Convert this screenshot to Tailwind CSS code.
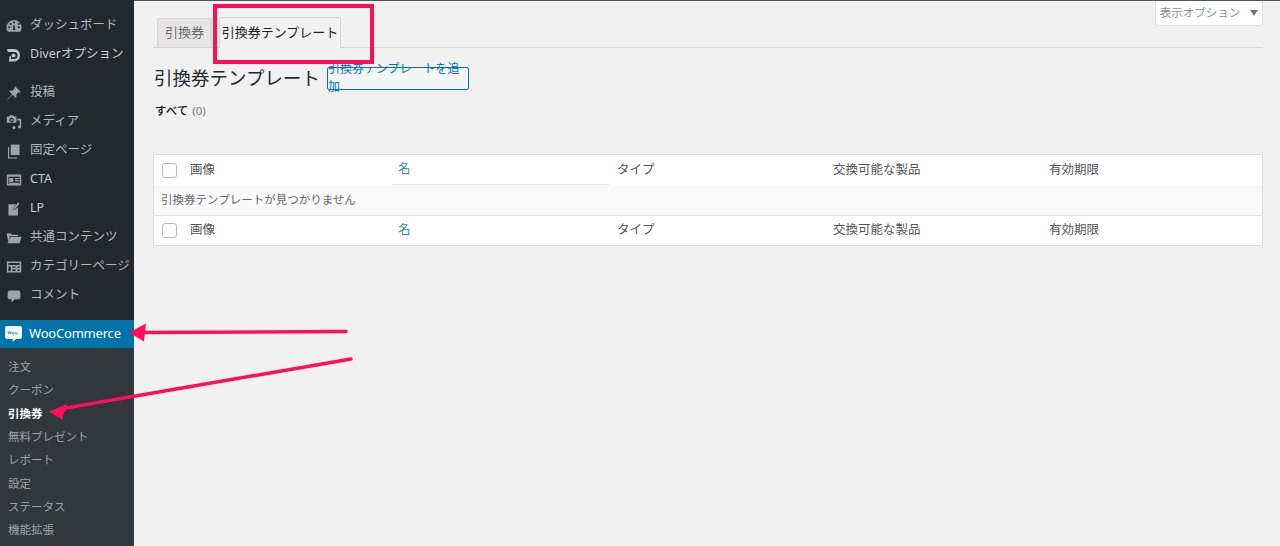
<!DOCTYPE html>
<html lang="ja">
<head>
<meta charset="utf-8">
<script src="https://cdn.jsdelivr.net/npm/@tailwindcss/browser@4"></script>
</head>
<body class="m-0 overflow-hidden bg-[#f1f1f1] font-['Noto_Sans','Noto_Sans_CJK_JP',sans-serif] text-[13px] text-[#444]">
<div class="relative flex h-[546px] w-[1280px] overflow-hidden">
  <aside class="flex h-full w-[134px] shrink-0 flex-col bg-[#23282d] text-[12.5px] text-[#b4b9be]">
    <nav class="flex flex-col pt-[11px]">
      <a class="flex h-[29px] items-center gap-[8px] pl-[6px]"><svg class="h-[16px] w-[16px] fill-[#9ea3a8]" viewBox="0 0 20 20"><path d="M10 2.5a9.5 9.5 0 0 0-9.5 9.5c0 2 .6 3.8 1.7 5.3h15.6a9.4 9.4 0 0 0 1.7-5.3A9.5 9.5 0 0 0 10 2.5zM4 13a1.3 1.3 0 1 1 0-2.6A1.3 1.3 0 0 1 4 13zm2-4.300a1.300 1.300 0 1 1 0-2.600 1.300 1.300 0 0 1 0 2.600zM10 7a1.300 1.300 0 1 1 0-2.600A1.300 1.300 0 0 1 10 7zm1.500 8h-3l.9-6h1.200zm4.500-6.300a1.300 1.300 0 1 1 0-2.600 1.300 1.300 0 0 1 0 2.600zm0 4.300a1.300 1.300 0 1 1 0-2.600 1.300 1.300 0 0 1 0 2.600z"/></svg><span>ダッシュボード</span></a>
      <a class="flex h-[29px] items-center gap-[8px] pl-[6px] text-[#c8ccd0]"><svg class="h-[16px] w-[16px]" viewBox="0 0 16 16"><path d="M1 2h7a6 6 0 0 1 6 6.500A6 6 0 0 1 8 14.500H4l1.500-2.500h2.500a3.500 3.500 0 0 0 .2-7H1.800z" fill="#c3c6c9"/><circle cx="7.500" cy="8.500" r="2" fill="#c3c6c9"/><path d="M5 9v5.500H3l.5-5z" fill="#c3c6c9"/></svg><span>Diverオプション</span></a>
      <div class="h-[9px]"></div>
      <a class="flex h-[29px] items-center gap-[8px] pl-[6px]"><svg class="h-[16px] w-[16px] fill-[#9ea3a8]" viewBox="0 0 20 20"><path d="M11.400 1.500l7.100 7.100c-.7.700-1.800.8-2.700.4l-3 3c.6 1.400.4 3-.6 4.100L8.400 12.300 2 18.500l-.5-.5 6.200-6.400-3.800-3.800c1.100-1 2.700-1.200 4.100-.6l3-3c-.4-.9-.3-2 .4-2.700z"/></svg><span>投稿</span></a>
      <a class="flex h-[29px] items-center gap-[8px] pl-[6px]"><svg class="h-[16px] w-[16px] fill-[#9ea3a8]" viewBox="0 0 20 20"><path d="M1 3h3l1-1.500h4L10 3h3v8H1zm6 1.800a2.700 2.700 0 1 0 0 5.400 2.700 2.700 0 0 0 0-5.400zM19 6v10a2 2 0 1 1-2-2V8h-3V6zM12 17a2 2 0 1 1-2-2 2 2 0 0 1 2 2z"/><circle cx="7" cy="7.500" r="1.300"/></svg><span>メディア</span></a>
      <a class="flex h-[29px] items-center gap-[8px] pl-[6px]"><svg class="h-[16px] w-[16px] fill-[#9ea3a8]" viewBox="0 0 20 20"><path d="M6 2h11v13H6z"/><path d="M4 5v13h10v1.500H2.500V5z"/></svg><span>固定ページ</span></a>
      <a class="flex h-[29px] items-center gap-[8px] pl-[6px] text-[#c8ccd0]"><svg class="h-[16px] w-[16px] fill-[#9ea3a8]" viewBox="0 0 20 20"><path fill-rule="evenodd" d="M1 3h18v14H1zm2 3v9h14V6zm1 1.500h5v5H4zm7 0h5v1.500h-5zm0 2.500h5v1.500h-5zm-7 3.500h12V15H4z"/></svg><span>CTA</span></a>
      <a class="flex h-[29px] items-center gap-[8px] pl-[6px] text-[#c8ccd0]"><svg class="h-[16px] w-[16px] fill-[#9ea3a8]" viewBox="0 0 20 20"><path d="M3 4h10l-3 3.500-1.500 4 4-1.500L15 8v10H3z"/><path d="M15 2l2 1.500-6 6.500-2 .8.700-2z"/></svg><span>LP</span></a>
      <a class="flex h-[29px] items-center gap-[8px] pl-[6px]"><svg class="h-[16px] w-[16px] fill-[#9ea3a8]" viewBox="0 0 20 20"><path d="M1 6V4.500h5L7.500 6H15v1.500H5L3 15zM5.800 8.500H19.500L17 16.500H1.800z"/></svg><span>共通コンテンツ</span></a>
      <a class="flex h-[29px] items-center gap-[8px] pl-[6px]"><svg class="h-[16px] w-[16px] fill-[#9ea3a8]" viewBox="0 0 20 20"><path fill-rule="evenodd" d="M1 3h18v14H1zm2 2v2.500h14V5zm0 4.500V15h3V9.500zm5 0V11h4V9.500zm6 0V11h3V9.500zM8 13v2h4v-2zm6 0v2h3v-2z"/></svg><span>カテゴリーページ</span></a>
      <a class="flex h-[29px] items-center gap-[8px] pl-[6px]"><svg class="h-[16px] w-[16px] fill-[#9ea3a8]" viewBox="0 0 20 20"><path d="M4.500 3h11A2.500 2.500 0 0 1 18 5.500v6a2.500 2.500 0 0 1-2.500 2.500H11l-4 4v-4H4.500A2.500 2.500 0 0 1 2 11.500v-6A2.500 2.500 0 0 1 4.500 3z"/></svg><span>コメント</span></a>
    </nav>
    <a class="mt-[10px] flex h-[28px] items-center gap-[7px] bg-[#0073aa] pl-[5px] text-white"><svg class="h-[18px] w-[17px]" viewBox="0 0 17 18"><path d="M2 1h13a2 2 0 0 1 2 2v9a2 2 0 0 1-2 2h-4l-3.500 3L8 14H2a2 2 0 0 1-2-2V3a2 2 0 0 1 2-2z" fill="#f3f8fb"/><path d="M3 6l.8 3 .9-2.500.9 2.500.8-3M8.200 7.500a.9.900 0 1 0 .01 0zM11.500 7.500a.9.900 0 1 0 .01 0z" fill="none" stroke="#3b84ad" stroke-width=".8"/></svg><span class="text-[13px] tracking-[-0.2px]">WooCommerce</span></a>
    <div class="flex flex-1 flex-col bg-[#32373c] pt-[7px] pl-[8px] text-[11.500px] text-[#9ea3a8]">
      <a class="flex h-[23.300px] items-center">注文</a>
      <a class="flex h-[23.300px] items-center">クーポン</a>
      <a class="flex h-[23.300px] items-center font-bold text-white">引換券</a>
      <a class="flex h-[23.300px] items-center">無料プレゼント</a>
      <a class="flex h-[23.300px] items-center">レポート</a>
      <a class="flex h-[23.300px] items-center">設定</a>
      <a class="flex h-[23.300px] items-center">ステータス</a>
      <a class="flex h-[23.300px] items-center">機能拡張</a>
    </div>
  </aside>

  <main class="relative min-w-0 flex-1">
    <div class="h-px bg-[#50565a]"></div>
    <div class="absolute top-px right-[17px] flex h-[25px] w-[108px] items-center justify-center gap-[10px] rounded-b-[4px] border border-t-0 border-[#e1e1e1] bg-white text-[11.500px] text-[#8a8f94]"><span>表示オプション</span><span class="h-0 w-0 border-x-[4px] border-t-[6px] border-x-transparent border-t-[#72777c]"></span></div>

    <div class="ml-[19px] mr-[17px] mt-[16px] flex h-[31px] items-end gap-[7px] border-b border-[#d5d5d5] pl-[4px]">
      <a class="-mb-px flex h-[30px] w-[55px] items-center justify-center border border-[#d5d5d5] bg-[#e5e5e5] text-[13px] text-[#6a6a6a]">引換券</a>
      <a class="-mb-px flex h-[31px] w-[122px] items-center justify-center border border-b-0 border-[#d5d5d5] bg-[#f1f1f1] text-[13px] text-[#1f1f1f]">引換券テンプレート</a>
    </div>

    <div class="ml-[20px] mt-[18px] flex items-center gap-[7px]">
      <h1 class="text-[18.500px] leading-[24px] font-normal text-[#23282d]">引換券テンプレート</h1>
      <a class="flex h-[23px] w-[142px] items-center justify-center rounded-[2px] border border-[#0073aa] bg-[#f3f5f6] text-[12px] text-[#0073aa]">引換券テンプレートを追加</a>
    </div>

    <div class="ml-[21px] mt-[12px] flex h-[18px] items-center gap-[4px] text-[11.500px]"><span class="font-medium text-[#111]">すべて</span><span class="text-[#72777c]">(0)</span></div>

    <div class="ml-[19px] mr-[17px] mt-[34px] border border-[#dcdcdc] bg-white text-[12.500px] text-[#555]">
      <div class="flex h-[30px] items-center">
        <span class="ml-[8px] h-[15px] w-[15px] rounded-[3px] border border-[#b4b9be] bg-white"></span>
        <span class="ml-[13px] w-[208px]">画像</span>
        <span class="flex h-[30px] w-[217px] items-center border-b border-[#e5e5e5] pl-[6px] -ml-[6px] text-[#2e8bb8]">名</span>
        <span class="ml-[8px] w-[216px]">タイプ</span>
        <span class="w-[216px]">交換可能な製品</span>
        <span>有効期限</span>
      </div>
      <div class="flex h-[30px] items-center bg-[#f9f9f9] pl-[7px] text-[11.500px] text-[#666]">引換券テンプレートが見つかりません</div>
      <div class="flex h-[30px] items-center border-t border-[#e1e1e1]">
        <span class="ml-[8px] h-[15px] w-[15px] rounded-[3px] border border-[#b4b9be] bg-white"></span>
        <span class="ml-[13px] w-[208px]">画像</span>
        <span class="-ml-[6px] w-[217px] pl-[6px] text-[#2e8bb8]">名</span>
        <span class="ml-[8px] w-[216px]">タイプ</span>
        <span class="w-[216px]">交換可能な製品</span>
        <span>有効期限</span>
      </div>
    </div>
  </main>

  <div class="absolute left-[213px] top-[4px] h-[60px] w-[161px] border-[4px] border-[#ff0f5b]"></div>
  <svg class="absolute inset-0 h-[546px] w-[1280px]" viewBox="0 0 1280 546" fill="none">
    <path d="M346 331.500L145 332.500" stroke="#ff0f5b" stroke-width="3.500" stroke-linecap="round"/>
    <path d="M129 332.500L146 323.500L144 341.500Z" fill="#ff0f5b"/>
    <path d="M351 359L60 409" stroke="#ff0f5b" stroke-width="3.500" stroke-linecap="round"/>
    <path d="M49 411.500L67 404L62 419.500Z" fill="#ff0f5b"/>
  </svg>
</div>
</body>
</html>
